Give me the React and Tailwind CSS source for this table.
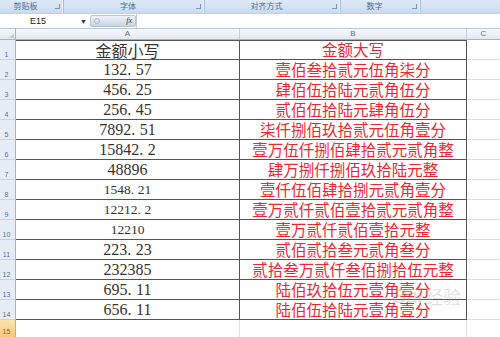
import React from "react";

const rows = [
  ["金额小写", "金额大写", 0],
  ["132.57", "壹佰叁拾贰元伍角柒分", 0],
  ["456.25", "肆佰伍拾陆元贰角伍分", 0],
  ["256.45", "贰佰伍拾陆元肆角伍分", 0],
  ["7892.51", "柒仟捌佰玖拾贰元伍角壹分", 0],
  ["15842.2", "壹万伍仟捌佰肆拾贰元贰角整", 0],
  ["48896", "肆万捌仟捌佰玖拾陆元整", 0],
  ["1548.21", "壹仟伍佰肆拾捌元贰角壹分", 1],
  ["12212.2", "壹万贰仟贰佰壹拾贰元贰角整", 1],
  ["12210", "壹万贰仟贰佰壹拾元整", 1],
  ["223.23", "贰佰贰拾叁元贰角叁分", 0],
  ["232385", "贰拾叁万贰仟叁佰捌拾伍元整", 0],
  ["695.11", "陆佰玖拾伍元壹角壹分", 0],
  ["656.11", "陆佰伍拾陆元壹角壹分", 0],
];

function Num({ v }) {
  const i = v.indexOf(".");
  if (i < 0) return <>{v}</>;
  return (
    <>
      {v.slice(0, i)}
      <span className="mr-[0.28em]">.</span>
      {v.slice(i + 1)}
    </>
  );
}

function Group({ label, w }) {
  return (
    <div className={`${w} h-full flex items-center border-r border-[#a9bfdc] shadow-[inset_-1px_0_0_#eef4fb]`}>
      <div className="flex-1 text-center text-[8px] leading-none text-[#4b6c9a]">{label}</div>
      <div className="w-[12px] flex items-center justify-center">
        <div className="w-[5px] h-[5px] border-r border-b border-[#7e98bb]" />
      </div>
    </div>
  );
}

export default function App() {
  return (
    <div className="w-[500px] h-[337px] overflow-hidden bg-white relative font-['Liberation_Sans','Noto_Sans_CJK_SC',sans-serif]">
      {/* ribbon group labels */}
      <div className="h-[13px] flex bg-gradient-to-b from-[#dfe9f6] to-[#cadbf0]">
        <Group label="剪贴板" w="w-[64px]" />
        <Group label="字体" w="w-[141px]" />
        <Group label="对齐方式" w="w-[136px]" />
        <Group label="数字" w="w-[80px]" />
        <div className="flex-1" />
      </div>
      {/* formula bar */}
      <div className="h-[15px] flex items-center bg-white border-t border-[#c0d0e6]">
        <div className="w-[80px] text-[9px] leading-none pl-[30px] text-[#222]">E15</div>
        <div className="w-[10px] text-[7px] leading-none text-[#333]">▼</div>
        <div className="w-[46px] h-[12px] rounded-[2px] bg-gradient-to-b from-[#eef2f8] to-[#c9d4e3] border border-[#b7c5d8] flex items-center px-[3px]">
          <div className="w-[6px] h-[6px] rounded-full border border-[#a9b8cc]" />
          <div className="flex-1" />
          <span className="text-[8px] italic font-['Liberation_Serif',serif] text-[#333] leading-none">fx</span>
        </div>
        <div className="flex-1 h-full border-l border-[#c0cbd9]" />
      </div>
      <div className="h-[1px] bg-[#b9c8dc]" />
      {/* column headers */}
      <div className="h-[11px] flex bg-gradient-to-b from-[#f7f9fc] to-[#e2e9f3] border-b border-[#9eb6ce] text-[8px] leading-none text-[#5b6f8c]">
        <div className="w-[16px] h-full border-r border-[#9eb6ce] relative">
          <div className="absolute right-[1px] bottom-[1px] w-0 h-0 border-l-[5px] border-l-transparent border-b-[5px] border-b-[#c3cfdf]" />
        </div>
        <div className="w-[224px] h-full flex items-center justify-center border-r border-[#c3cede]">A</div>
        <div className="w-[227px] h-full flex items-center justify-center border-r border-[#c3cede]">B</div>
        <div className="flex-1 h-full flex items-center justify-center">C</div>
      </div>
      {/* rows */}
      {rows.map(([a, b, small], idx) => (
        <div key={idx} className="h-[20px] flex">
          <div className="w-[16px] h-full bg-[#e6edf7] border-r border-[#9eb6ce] border-b border-b-[#c5d3e4] flex items-end justify-center pr-[2px] pb-[1px] text-[7px] leading-none text-[#56709a]">
            {idx + 1}
          </div>
          <div
            className={`w-[224px] h-full flex items-center justify-center border-r border-b border-[#555] ${idx === 0 ? "border-t" : ""} text-[#333] ${idx === 0 ? "text-[16px] font-['Noto_Sans_CJK_SC',sans-serif]" : small ? "text-[13.5px] font-['Liberation_Serif',serif]" : "text-[16px] font-['Liberation_Serif',serif]"} leading-none`}
          >
            {idx === 0 ? a : <Num v={a} />}
          </div>
          <div
            className={`w-[227px] h-full flex items-center justify-center border-r border-b border-[#555] ${idx === 0 ? "border-t" : ""} text-[#f0262f] text-[15.5px] leading-none font-['Noto_Sans_CJK_SC',sans-serif] whitespace-nowrap`}
          >
            {b}
          </div>
          <div className="flex-1 h-full border-b border-[#dbe0e8]" />
        </div>
      ))}
      <div className="h-[20px] flex">
        <div className="w-[16px] h-full bg-gradient-to-b from-[#fbe2ad] to-[#f6c570] border-r border-[#9eb6ce] flex items-start justify-center pr-[2px] pt-[8px] text-[7px] leading-none text-[#8a6a2e]">
          15
        </div>
        <div className="w-[224px] h-full border-r border-[#dbe0e8]" />
        <div className="w-[227px] h-full border-r border-[#dbe0e8]" />
        <div className="flex-1 h-full" />
      </div>
      {/* watermark */}
      <div className="absolute left-[392px] top-[286px] flex items-center gap-[2px] text-[rgba(150,150,150,0.3)] pointer-events-none">
        <span className="text-[20px] italic font-bold font-['Liberation_Sans',sans-serif] leading-none">Bai</span>
        <span className="text-[18px] leading-none font-['Noto_Sans_CJK_SC',sans-serif]">经验</span>
      </div>
    </div>
  );
}
